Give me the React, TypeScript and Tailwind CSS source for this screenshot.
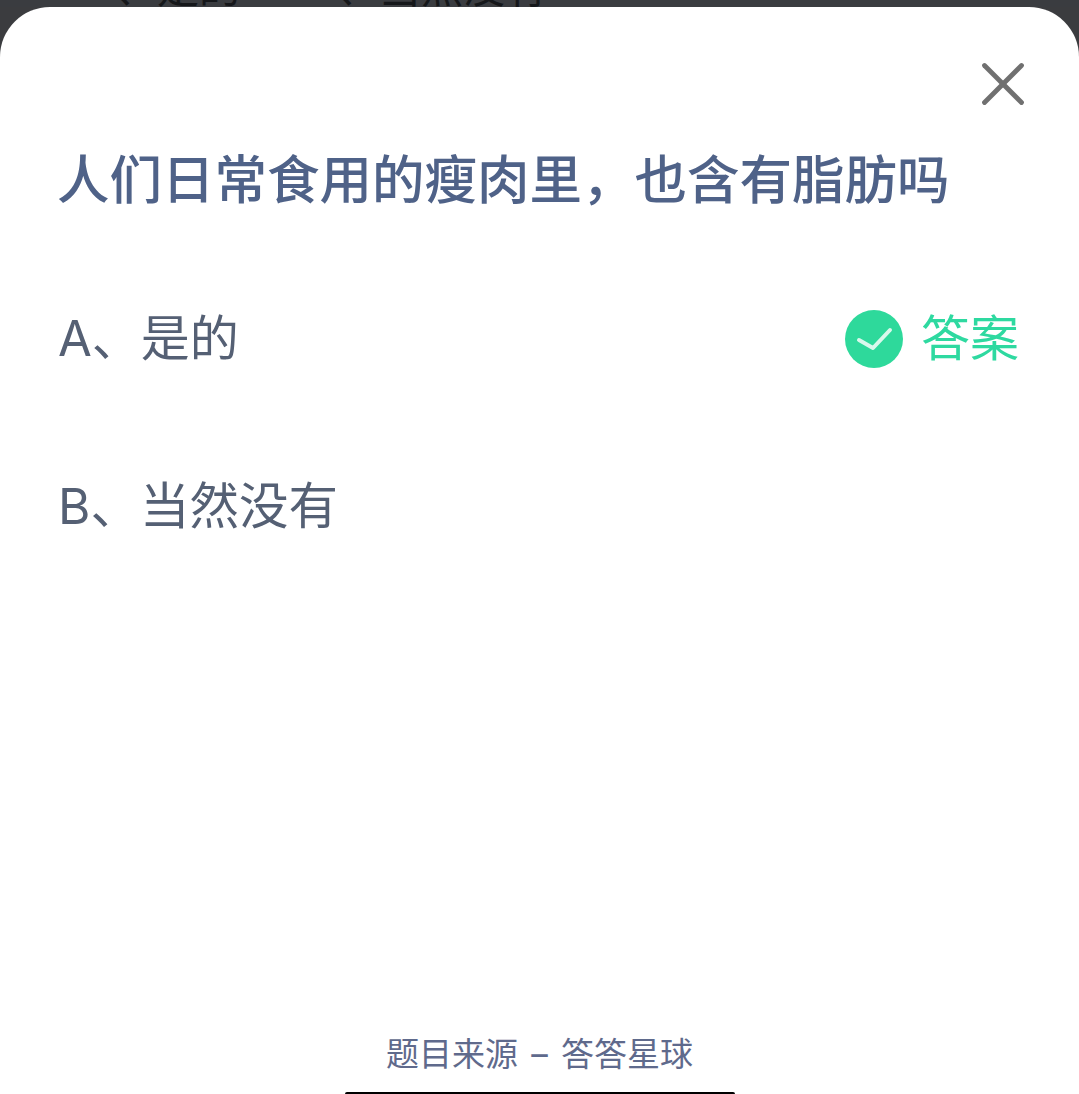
import { X } from 'lucide-react';

const cjk = 'font-["Inter","Noto_Sans_CJK_SC","Noto_Sans",sans-serif]';

export default function App() {
  return (
    <div className={`h-[1094px] w-[1079px] overflow-hidden bg-[#3b3c3f] ${cjk}`}>
      {/* Text of the page behind the sheet, only its lower edge shows */}
      <div className="flex h-[7px] items-end overflow-hidden bg-[#3a3c40] pl-[115px] text-[42px] leading-[42px] text-[#15171a]">
        <span className="mb-[-2px] w-[222px] shrink-0 whitespace-nowrap">、是的</span>
        <span className="mb-[-2px] whitespace-nowrap">、当然没有</span>
      </div>

      {/* Sheet */}
      <div className="flex h-[1087px] flex-col rounded-t-[50px] bg-white">
        <div className="flex justify-end pt-[40px] pr-[39px]">
          <X className="h-[74px] w-[74px] text-[#707070]" strokeWidth={1.55} />
        </div>

        <h1 className="mt-[27px] pl-[57px] text-[52.5px] leading-[64px] font-medium whitespace-nowrap text-[#4f6288]">
          人们日常食用的瘦肉里，也含有脂肪吗
        </h1>

        <div className="mt-[95px] flex h-[64px] items-center justify-between pr-[60px] pl-[58px] text-[49px] text-[#556074]">
          <span>A、是的</span>
          <span className="flex items-center gap-[18px] text-[#2ed9a0]">
            <span className="flex h-[58px] w-[58px] items-center justify-center rounded-full bg-[#2ed99b]">
              <svg className="h-[58px] w-[58px]" viewBox="0 0 58 58" fill="none">
                <polyline
                  points="14,30 28,38 45,20"
                  stroke="#d9f8ec"
                  strokeWidth="4"
                  strokeLinecap="round"
                  strokeLinejoin="round"
                />
              </svg>
            </span>
            答案
          </span>
        </div>

        <div className="mt-[103px] h-[64px] pl-[58px] text-[49.5px] leading-[64px] text-[#556074]">
          B、当然没有
        </div>

        <div className="mt-auto flex flex-col items-center">
          <p className="mb-[16px] text-[33px] leading-[44px] text-[#5f6a8c]">
            题目来源<span className="mx-[4px]"> – </span>答答星球
          </p>
          <div className="h-[2px] w-[390px] rounded-t-[3px] bg-black" />
        </div>
      </div>
    </div>
  );
}
